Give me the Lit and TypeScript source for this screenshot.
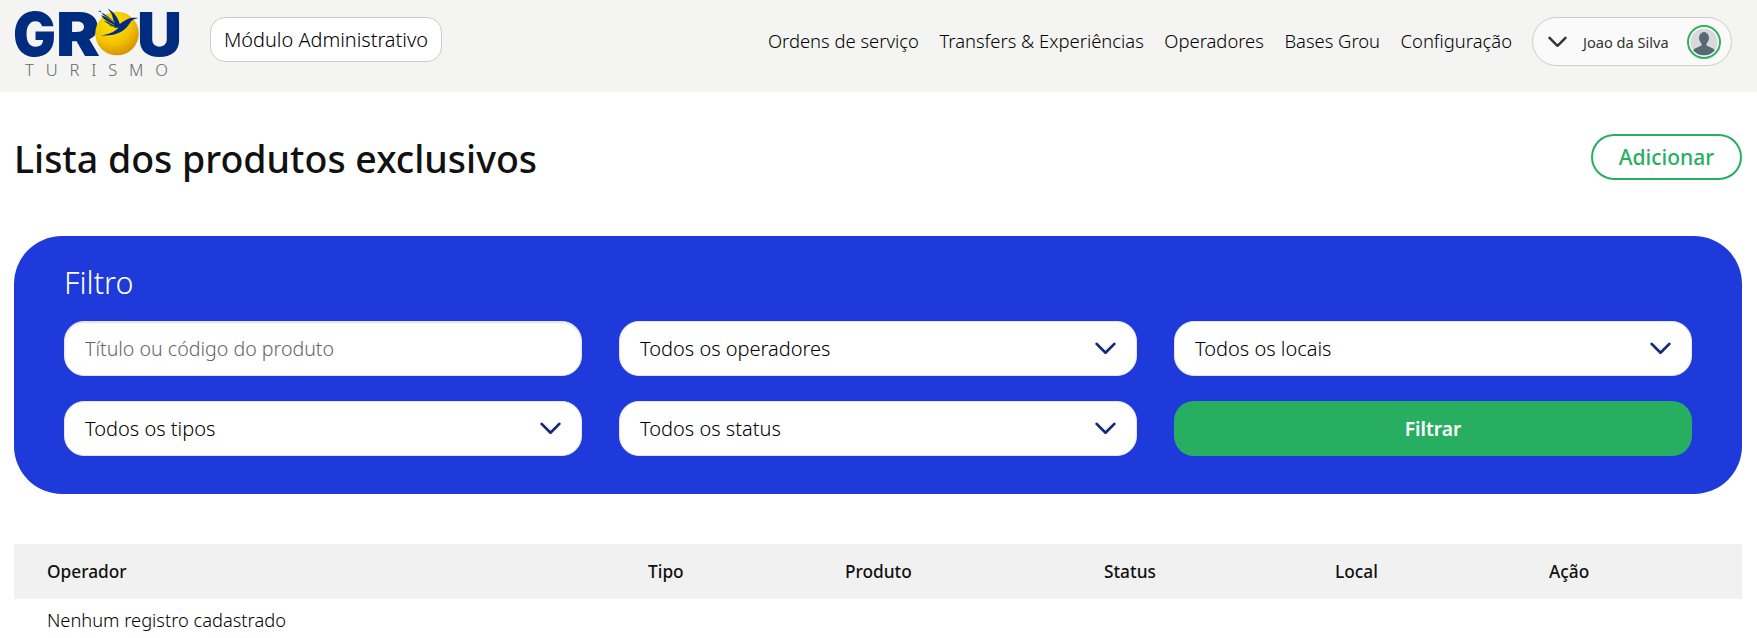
import { LitElement, html, css, svg } from "lit";
import { customElement } from "lit/decorators.js";

const chevron = (cls: string) => html`<svg class=${cls} viewBox="0 0 20 12" aria-hidden="true"><path d="M1.6 1.6 10 10 18.4 1.6" fill="none" stroke="currentColor" stroke-width="2.6" stroke-linecap="round" stroke-linejoin="round"/></svg>`;

const logo = html`<svg class="logo" viewBox="14 5.5 168 72" role="img" aria-label="Grou Turismo">
  <defs>
    <radialGradient id="sun" cx="38%" cy="28%" r="80%">
      <stop offset="0" stop-color="#ffe600"/>
      <stop offset=".55" stop-color="#f2c400"/>
      <stop offset="1" stop-color="#d08a00"/>
    </radialGradient>
  </defs>
  ${svg`<text class="lg" x="13" y="55" textLength="43" lengthAdjust="spacingAndGlyphs">G</text>
  <text class="lg" x="56" y="55" textLength="44" lengthAdjust="spacingAndGlyphs">R</text>
  <text class="lg" x="137" y="55" textLength="45" lengthAdjust="spacingAndGlyphs">U</text>
  <circle cx="117" cy="33" r="21.800" fill="url(#sun)"/>
  <path fill="#002c80" d="M98 10.5c3 1 6.500 3 9.500 5.200 2.300 1.700 4.300 3.300 6.200 5.300l-1.700-6.500c-1-2.300-2.700-4.500-4.500-6.500 3.400 1.700 7 5 9 8.200 1.500 2.500 2.500 5 3.300 7.300l3-2.300 4.500-2.500c2.700-1.200 6.700-1.700 10.700-1.200l-4.500 1.500-2.500 1.700c-1.200 2-3 5-6 7.700-3.500 3.200-9 5.500-15 6.300l-9.500.6c6-1.200 12-3 15.500-5.800l2.500-2.300c-3.500.3-7-.7-10-2.500l3.500.3c-3-1-6-2.800-8-4.800l4 .8c-3-1.500-5.500-3.800-7-6.500l4 1.800c-2-1.800-3.500-3.800-4.500-6z"/>
  <g stroke="#f2c400" stroke-width=".7" fill="none"><path d="M104 15l11 7M105 20l9 4.500M108 25l7 1.500"/></g>
  <text class="lt" x="25" y="75" textLength="143">TURISMO</text>`}
</svg>`;

const avatar = html`<svg class="avatar" viewBox="0 0 34 34" aria-hidden="true">
  <circle cx="17" cy="17" r="16" fill="#fff" stroke="#2fb05c" stroke-width="2"/>
  <circle cx="17" cy="17" r="13.600" fill="#d9d9d9"/>
  <clipPath id="av"><circle cx="17" cy="17" r="13.600"/></clipPath>
  <g clip-path="url(#av)" fill="#566a76">
    <ellipse cx="17" cy="13" rx="5" ry="6"/>
    <path d="M14.500 17h5v3.500l6.500 3c2 1 2.500 3 2.500 7h-23c0-4 .5-6 2.500-7l6.500-3z"/>
  </g>
</svg>`;

const columns = ["Operador", "Tipo", "Produto", "Status", "Local", "Ação"];
const nav = ["Ordens de serviço", "Transfers & Experiências", "Operadores", "Bases Grou", "Configuração"];

@customElement("app-root")
export class AppRoot extends LitElement {
  static styles = css`
    :host { display: block; font-family: "Noto Sans", "Open Sans", sans-serif; color: #000; background: #fff; min-height: 638px; overflow: hidden; }
    * { box-sizing: border-box; }
    header { height: 92px; background: #f4f4f3; display: flex; align-items: center; padding: 0 25px 9px 14px; }
    .logo { width: 168px; height: 72px; flex: none; display: block; overflow: visible; }
    .lg { font-family: "Inter", "Liberation Sans", sans-serif; font-weight: 900; font-size: 60px; fill: #002c80; }
    .lt { font-family: "Noto Sans", sans-serif; font-weight: 300; font-size: 16.500px; fill: #666; }
    .module { margin-left: 28px; align-self: flex-start; margin-top: 17px; height: 45px; padding: 0 13px; display: flex; align-items: center; background: #fff; border: 1px solid #ccc; border-radius: 15px; font-size: 19.900px; font-weight: 300; white-space: nowrap; }
    nav { margin-left: auto; margin-bottom: 2px; display: flex; gap: 20.500px; font-size: 18.400px; font-weight: 300; white-space: nowrap; }
    .user { margin-left: 20px; width: 200px; height: 49px; display: flex; align-items: center; background: #fafafa; border: 1px solid #ccc; border-radius: 25px; padding: 0 10px 0 15px; }
    .user-chev { width: 19px; height: 12px; color: #333; flex: none; }
    .user-name { margin-left: 16px; font-size: 14.600px; font-weight: 400; color: #333; white-space: nowrap; }
    .avatar { width: 34px; height: 34px; margin-left: auto; flex: none; }
    main { padding: 0 15px 0 14px; }
    .title { margin-top: 42px; height: 46px; display: flex; align-items: center; justify-content: space-between; }
    h1 { margin: 0; font-size: 37.500px; font-weight: 500; color: #111; line-height: 46px; position: relative; top: 2px; }
    .add { width: 151px; height: 46px; display: flex; align-items: center; justify-content: center; border: 2px solid #27ae60; border-radius: 23px; background: #fff; color: #27ae60; font: 500 21px "Noto Sans", sans-serif; }
    .panel { margin-top: 56px; height: 258px; background: #1e3adb; border-radius: 48px; padding: 25px 50px 0; }
    .panel h2 { margin: 0; height: 60px; font-size: 30.500px; font-weight: 300; color: #fff; line-height: 42px; }
    .grid { display: grid; grid-template-columns: repeat(3, 518px); gap: 25px 37px; }
    .field { height: 55px; border-radius: 20px; background: #fff; border: 1px solid #e4e4ee; display: flex; align-items: center; justify-content: space-between; padding: 0 20px; font-size: 20px; font-weight: 300; color: #000; }
    input.field { width: 100%; font-family: inherit; font-size: 19.600px; outline: none; box-shadow: inset 0 1px 2px rgba(0,0,0,.12); }
    input.field::placeholder { color: #666; opacity: 1; }
    .chev { width: 21px; height: 13px; color: #152a75; flex: none; }
    .filter { height: 55px; border-radius: 20px; background: #27ae60; color: #fff; display: flex; align-items: center; justify-content: center; font-size: 19.300px; font-weight: 600; }
    .thead { display: grid; grid-template-columns: 601px 197px 259px 231px 214px 1fr; margin-top: 50px; height: 55px; align-items: center; background: #f1f1f1; padding-left: 33px; font-size: 17.300px; font-weight: 500; color: #111; }
    .empty { padding: 7px 0 0 33px; font-size: 18.300px; font-weight: 300; line-height: 27px; }
  `;

  render() {
    return html`
      <header>
        ${logo}
        <div class="module">Módulo Administrativo</div>
        <nav>${nav.map((n) => html`<span>${n}</span>`)}</nav>
        <div class="user">${chevron("user-chev")}<span class="user-name">Joao da Silva</span>${avatar}</div>
      </header>
      <main>
        <div class="title"><h1>Lista dos produtos exclusivos</h1><div class="add">Adicionar</div></div>
        <section class="panel">
          <h2>Filtro</h2>
          <div class="grid">
            <input class="field" placeholder="Título ou código do produto" />
            <div class="field">Todos os operadores${chevron("chev")}</div>
            <div class="field">Todos os locais${chevron("chev")}</div>
            <div class="field">Todos os tipos${chevron("chev")}</div>
            <div class="field">Todos os status${chevron("chev")}</div>
            <div class="filter">Filtrar</div>
          </div>
        </section>
        <div class="thead">${columns.map((c) => html`<span>${c}</span>`)}</div>
        <div class="empty">Nenhum registro cadastrado</div>
      </main>
    `;
  }
}
